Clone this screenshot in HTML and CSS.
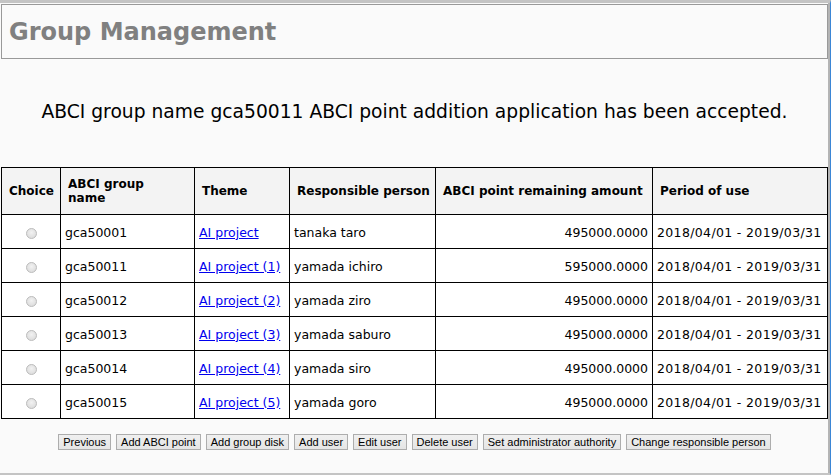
FILE: index.html
```html
<!DOCTYPE html>
<html>
<head>
<meta charset="utf-8">
<title>Group Management</title>
<link rel="stylesheet" href="styles.css">
</head>
<body>
<div class="frame">
  <div class="inner">
    <div class="header"><h1 class="title">Group Management</h1></div>
    <p class="msg">ABCI group name gca50011 ABCI point addition application has been accepted.</p>
    <table class="grid">
      <colgroup>
        <col class="c1"><col class="c2"><col class="c3"><col class="c4"><col class="c5"><col class="c6">
      </colgroup>
      <thead>
        <tr>
          <th>Choice</th>
          <th>ABCI group<br>name</th>
          <th>Theme</th>
          <th>Responsible person</th>
          <th>ABCI point remaining amount</th>
          <th>Period of use</th>
        </tr>
      </thead>
      <tbody>
        <tr><td class="choice"><span class="radio"></span></td><td>gca50001</td><td><a href="#">AI project</a></td><td>tanaka taro</td><td class="num">495000.0000</td><td class="period">2018/04/01 - 2019/03/31</td></tr>
        <tr><td class="choice"><span class="radio"></span></td><td>gca50011</td><td><a href="#">AI project (1)</a></td><td>yamada ichiro</td><td class="num">595000.0000</td><td class="period">2018/04/01 - 2019/03/31</td></tr>
        <tr><td class="choice"><span class="radio"></span></td><td>gca50012</td><td><a href="#">AI project (2)</a></td><td>yamada ziro</td><td class="num">495000.0000</td><td class="period">2018/04/01 - 2019/03/31</td></tr>
        <tr><td class="choice"><span class="radio"></span></td><td>gca50013</td><td><a href="#">AI project (3)</a></td><td>yamada saburo</td><td class="num">495000.0000</td><td class="period">2018/04/01 - 2019/03/31</td></tr>
        <tr><td class="choice"><span class="radio"></span></td><td>gca50014</td><td><a href="#">AI project (4)</a></td><td>yamada siro</td><td class="num">495000.0000</td><td class="period">2018/04/01 - 2019/03/31</td></tr>
        <tr><td class="choice"><span class="radio"></span></td><td>gca50015</td><td><a href="#">AI project (5)</a></td><td>yamada goro</td><td class="num">495000.0000</td><td class="period">2018/04/01 - 2019/03/31</td></tr>
      </tbody>
    </table>
    <div class="buttons">
      <button class="btn">Previous</button>
      <button class="btn">Add ABCI point</button>
      <button class="btn">Add group disk</button>
      <button class="btn">Add user</button>
      <button class="btn">Edit user</button>
      <button class="btn">Delete user</button>
      <button class="btn">Set administrator authority</button>
      <button class="btn">Change responsible person</button>
    </div>
  </div>
</div>
</body>
</html>
```
FILE: styles.css
```css
html, body {
  margin: 0;
  padding: 0;
  background: #fafafa;
}
.frame {
  width: 831px;
  height: 475px;
  box-sizing: border-box;
  border-top: 3px solid #c4c4c4;
  border-bottom: 2px solid #c4c4c4;
  border-right: 1px solid #3b86d6;
  overflow: hidden;
}
.inner {
  height: 100%;
  box-sizing: border-box;
  border-right: 2px solid #b4b4b4;
  padding-left: 1px;
  padding-top: 1px;
  font-family: "DejaVu Sans", Verdana, sans-serif;
  color: #000;
}
.header {
  width: 827px;
  height: 55px;
  box-sizing: border-box;
  border: 1px solid #999;
  padding: 0 7px;
  display: flex;
  align-items: center;
}
.title {
  margin: 0;
  font-family: "DejaVu Sans", sans-serif;
  font-weight: bold;
  font-size: 24px;
  color: #808080;
  line-height: 28px;
}
.msg {
  margin: 41px 0 43px;
  width: 827px;
  text-align: center;
  font-size: 18.7px;
  line-height: 24px;
}
.grid {
  width: 826px;
  table-layout: fixed;
  border-collapse: collapse;
  font-size: 12.5px;
}
.c1 { width: 59px; }
.c2 { width: 134px; }
.c3 { width: 95px; }
.c4 { width: 146px; }
.c5 { width: 217px; }
.c6 { width: 175px; }
.grid th, .grid td {
  border: 1px solid #000;
  white-space: nowrap;
}
.grid th {
  background: #f3f3f3;
  font-size: 12px;
  font-weight: bold;
  text-align: left;
  padding: 0 7px;
  line-height: 14px;
  height: 46px;
}
.grid td {
  background: #fff;
  padding: 1px 4px 0;
  height: 32px;
}
.grid td.num {
  text-align: right;
}
.grid td.period {
  letter-spacing: 0.35px;
}
.grid td.choice {
  text-align: center;
}
.grid a {
  color: #0000ee;
}
.radio {
  display: inline-block;
  width: 9px;
  height: 9px;
  border: 1px solid #bdbdbd;
  border-radius: 50%;
  background: radial-gradient(circle at 50% 40%, #f2f2f2, #d6d6d6);
  vertical-align: middle;
}
.buttons {
  width: 827px;
  margin-top: 15px;
  display: flex;
  justify-content: center;
  gap: 5px;
}
.btn {
  font-family: "Liberation Sans", Arial, sans-serif;
  font-size: 11px;
  height: 16px;
  line-height: 14px;
  padding: 0 4px;
  margin: 0;
  border: 1px solid #adadad;
  background: linear-gradient(#f0f0f0, #e5e5e5);
  color: #000;
  border-radius: 0;
}
```
